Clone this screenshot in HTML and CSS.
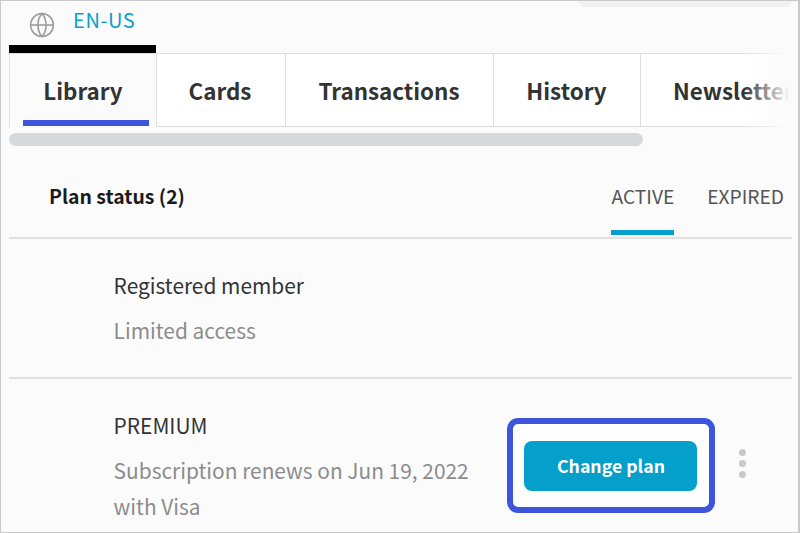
FILE: index.html
```html
<!DOCTYPE html>
<html lang="en">
<head>
<meta charset="utf-8">
<title>Account</title>
<link rel="stylesheet" href="styles.css">
</head>
<body>
<div class="frame">
  <div class="top-pill"></div>
  <div class="lang">
    <svg class="globe" width="26" height="26" viewBox="0 0 26 26" fill="none" stroke="#9d9d9d" stroke-width="1.6">
      <circle cx="13" cy="13" r="11.4"/>
      <path d="M13 1.6C7.6 7 7.6 19 13 24.4C18.4 19 18.4 7 13 1.6Z"/>
      <path d="M1.6 13h22.8"/>
    </svg>
    <span class="lang-text">EN-US</span>
  </div>
  <div class="black-bar"></div>
  <div class="tabs-wrap">
    <nav class="tabs">
      <a class="tab tab-library is-current">Library<span class="tab-mark"></span></a>
      <a class="tab tab-cards">Cards</a>
      <a class="tab tab-transactions">Transactions</a>
      <a class="tab tab-history">History</a>
      <a class="tab tab-newsletter">Newsletter</a>
    </nav>
    <div class="fade"></div>
  </div>
  <div class="scrollbar"><div class="thumb"></div></div>
  <div class="status-head">
    <div class="status-title">Plan status (2)</div>
    <div class="filters">
      <span class="filter is-active">ACTIVE</span>
      <span class="filter">EXPIRED</span>
    </div>
  </div>
  <div class="plan plan-first">
    <div class="plan-name">Registered member</div>
    <div class="plan-note">Limited access</div>
  </div>
  <div class="plan plan-second">
    <div class="plan-info">
      <div class="plan-name">PREMIUM</div>
      <div class="plan-note plan-note-wrap">Subscription renews on Jun 19, 2022<br>with Visa</div>
    </div>
    <div class="highlight"><button class="change">Change plan</button></div>
    <div class="dots"><i></i><i></i><i></i></div>
  </div>
</div>
</body>
</html>
```
FILE: styles.css
```css
* { box-sizing: border-box; }
html, body { margin: 0; padding: 0; }
body { width: 800px; height: 533px; overflow: hidden; }
.frame {
  position: relative;
  width: 800px;
  height: 533px;
  overflow: hidden;
  background: #fbfbfc;
  border: 1px solid #c9c9c9;
  border-right-width: 2px;
  font-family: "Noto Sans CJK KR", "Noto Sans", sans-serif;
  color: #2e2e2e;
}
.top-pill {
  position: absolute;
  left: 577px;
  top: -8px;
  width: 214px;
  height: 14px;
  background: #f1f1f2;
  border-radius: 7px;
}
.lang {
  display: flex;
  align-items: flex-start;
  height: 44px;
  padding-left: 28px;
}
.globe { margin-top: 11px; }
.lang-text {
  margin-left: 18px;
  margin-top: 4px;
  font-size: 20px;
  line-height: 30px;
  letter-spacing: 0.6px;
  color: #0ca0cc;
}
.black-bar { width: 147px; height: 8px; margin-left: 8px; background: #000; }
.tabs-wrap { position: relative; margin-left: 8px; height: 74px; overflow: hidden; }
.tabs { display: flex; height: 74px; width: 900px; }
.tab {
  position: relative;
  display: flex;
  align-items: center;
  justify-content: center;
  flex: none;
  height: 74px;
  font-size: 22.4px;
  font-weight: 700;
  background: #fff;
  border-top: 1px solid #dedede;
  border-bottom: 1px solid #dedede;
  border-right: 1px solid #dedede;
  color: #333;
}
.tab-library { width: 148px; background: #fbfbfc; border-left: 1px solid #dedede; border-bottom: 0; padding-bottom: 1px; }
.tab-cards { width: 129px; padding-right: 2px; }
.tab-transactions { width: 208px; padding-right: 1px; }
.tab-history { width: 147px; padding-right: 1px; }
.tab-newsletter { width: 200px; justify-content: flex-start; padding-left: 32px; border-right: 0; }
.tab-mark {
  position: absolute;
  left: 13px;
  bottom: 1px;
  width: 126px;
  height: 6px;
  background: #3d55dc;
}
.fade {
  position: absolute;
  right: 0;
  top: 0;
  width: 55px;
  height: 74px;
  background: linear-gradient(to right, rgba(251,251,252,0), #fbfbfc 85%);
}
.scrollbar { margin: 6px 0 0 8px; height: 13px; }
.thumb { width: 634px; height: 13px; background: #d6d9dc; border-radius: 7px; }
.status-head {
  display: flex;
  justify-content: space-between;
  margin: 0 6px 0 8px;
  height: 93px;
  border-bottom: 2px solid #e0e0e0;
}
.status-title {
  margin: 35px 0 0 40px;
  font-size: 19.4px;
  line-height: 30px;
  font-weight: 700;
  color: #1a1a1a;
}
.filters { display: flex; gap: 33px; padding-right: 8px; }
.filter {
  height: 91px;
  padding-top: 35px;
  font-size: 19.2px;
  line-height: 30px;
  color: #555;
}
.is-active { border-bottom: 5px solid #049fca; height: 89px; }
.plan { margin: 0 6px 0 8px; padding-left: 104.6px; }
.plan-first { height: 140px; border-bottom: 2px solid #e0e0e0; padding-top: 31px; }
.plan-name { font-size: 20.9px; line-height: 30px; color: #333; }
.plan-note { margin-top: 15px; font-size: 20.9px; line-height: 30px; color: #8c8c8c; }
.plan-note-wrap { margin-top: 12px; line-height: 36px; }
.plan-second { display: flex; align-items: flex-start; height: 160px; }
.plan-info { width: 393.4px; padding-top: 31px; }
.highlight {
  display: flex;
  align-items: center;
  justify-content: center;
  width: 208px;
  height: 95px;
  margin-top: 39px;
  padding-right: 1px;
  border: 6px solid #3d55dc;
  border-radius: 11px;
  background: #fff;
}
.change {
  width: 173px;
  height: 50px;
  padding: 0 0 2px 1px;
  border: 0;
  border-radius: 8px;
  background: #049fca;
  color: #fff;
  font-family: inherit;
  font-size: 17.7px;
  font-weight: 700;
}
.dots { display: flex; flex-direction: column; gap: 4px; margin: 70px 0 0 24px; }
.dots i { display: block; width: 7px; height: 7px; border-radius: 50%; background: #c9c9c9; }
```
